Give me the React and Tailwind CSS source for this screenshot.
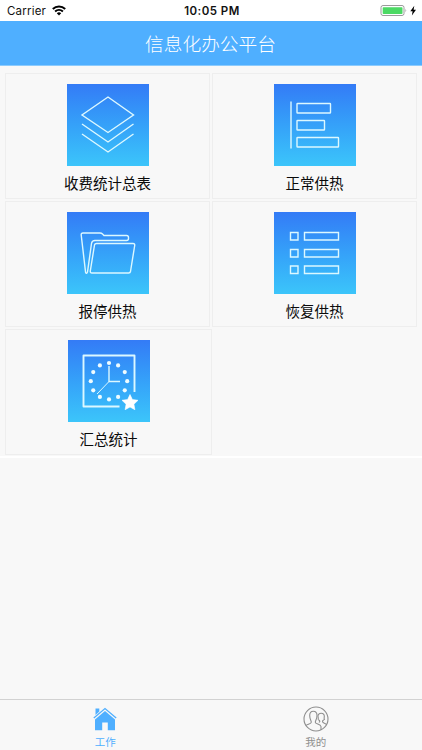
import React from "react";

function Tile({ children, label, last }) {
  return (
    <div
      className={
        "flex h-[126px] flex-col items-center border border-[#eeeeee] bg-[#f8f8f8] pt-[10px] " +
        (last ? "w-[207px]" : "w-[205px]")
      }
    >
      <svg className="h-[82px] w-[82px] shrink-0 bg-linear-to-b from-[#347bf6] to-[#3cc5fa]" viewBox="0 0 82 82" fill="none" stroke="#dcf8ff" strokeWidth="1.4">
        {children}
      </svg>
      <div className="mt-[6px] whitespace-nowrap text-[14.5px] leading-[21px] text-[#0a0a0a]">{label}</div>
    </div>
  );
}

const hours = [0, 1, 2, 3, 4, 5, 6, 7, 8, 9, 10, 11];

export default function App() {
  return (
    <div className="flex h-[750px] w-[422px] flex-col overflow-hidden bg-[#f8f8f8] font-['Noto_Sans_CJK_SC',sans-serif]">
      <div className="grid h-[21px] shrink-0 grid-cols-3 items-center bg-white pl-[7px] pr-[5px] font-['Inter',sans-serif] text-[11.5px] leading-[19px] text-[#111]">
        <div className="flex items-center gap-[6px]">
          <span className="pt-[2px] tracking-[0.2px]">Carrier</span>
          <svg className="h-[11px] w-[14px]" viewBox="0 0 14 11" fill="none" stroke="#000" strokeWidth="2">
            <path d="M.8 4C4.3.6 9.7.6 13.200 4M3.100 6.500C5.300 4.500 8.700 4.500 10.900 6.500" />
            <path d="M4.800 8.300Q7 6.400 9.200 8.300L7 10.600Z" fill="#000" stroke="none" />
          </svg>
        </div>
        <div className="whitespace-nowrap pt-[2px] text-center font-semibold tracking-[0.45px]">10:05 PM</div>
        <svg className="h-[13px] w-[37px] justify-self-end" viewBox="0 0 37 13">
          <rect x="1" y="1.500" width="23" height="10" rx="2" fill="#fff" stroke="#9b9b9b" />
          <rect x="2.700" y="3.200" width="19.800" height="6.800" rx=".7" fill="#4cd964" />
          <path d="M25.500 4.800Q27 6.500 25.500 8.200Z" fill="#999" />
          <path d="M34.300 1.800L30.300 7.200H32.600L31.900 11.400L36 5.700H33.600Z" fill="#000" />
        </svg>
      </div>
      <header className="flex h-[45px] shrink-0 items-center justify-center border-b border-[#8ccbfd] bg-[#4fafff] pr-px text-[18.7px] font-light text-white">
        信息化办公平台
      </header>
      <main className="flex h-[392px] shrink-0 flex-col gap-[2px] border-b-2 border-white pl-[5px] pt-[7px]">
        <div className="flex gap-[2px]">
          <Tile label="收费统计总表">
            <path d="M41 13L66.500 31L41 48.500L15 31ZM15 40L41 58L66.500 40M15 50L41 68L66.500 50" />
          </Tile>
          <Tile label="正常供热">
            <path d="M17 17.500V64.500" />
            <rect x="23" y="19.500" width="33.500" height="9.500" rx=".6" />
            <rect x="23" y="36.500" width="27.500" height="9.500" rx=".6" />
            <rect x="23" y="53.500" width="41.500" height="9.500" rx=".6" />
          </Tile>
        </div>
        <div className="flex gap-[2px]">
          <Tile label="报停供热">
            <path d="M18.600 60.500L14.200 23Q14 21 16 21H33Q34.500 21 35.500 22L37 23.500H59.500Q61.500 23.500 61.500 25.500V26.500Q61.500 28.500 59.500 28.500H28Q25 28.500 24.500 31.500L20.500 60Q19.500 62.500 18.600 60.500Z" />
            <path d="M29.500 31.500H66Q68 31.500 67.700 33.500L63.500 59.500Q63.200 61 61.700 61H25Q23 61 23.300 59L27.500 33Q27.800 31.500 29.500 31.500Z" />
          </Tile>
          <Tile label="恢复供热">
            <path d="M16.500 20.500h7.500v7.500h-7.500ZM30.500 20.500h34v7.500h-34ZM16.500 37.500h7.500v7.500h-7.500ZM30.500 37.500h34v7.500h-34ZM16.500 54h7.500v7.500h-7.500ZM30.500 54h34v7.500h-34Z" />
          </Tile>
        </div>
        <Tile label="汇总统计" last>
          <path d="M51.500 66.500H15.500V15.500H66.500V52" strokeWidth="1.9" strokeLinejoin="round" />
          <path d="M41 26V41.500H52" />
          <path d="M41 41.500L29 54" strokeWidth="1" />
          {hours.map((n) => (
            <circle
              key={n}
              cx={41 + 18.2 * Math.sin((n * Math.PI) / 6)}
              cy={41.2 - 18.2 * Math.cos((n * Math.PI) / 6)}
              r="2.100"
              fill="#effcff"
              stroke="none"
            />
          ))}
          <path d="M62 54.500L64.400 59.600L70 60.300L65.900 64.200L66.900 69.700L62 67L57.100 69.700L58.100 64.200L54 60.300L59.600 59.600Z" fill="#fff" stroke="#fff" strokeWidth=".6" />
        </Tile>
      </main>
      <nav className="mt-auto grid h-[51px] shrink-0 grid-cols-2 border-t border-[#d2d2d2] bg-[#f8f8f8] pr-px text-[10.5px] leading-[14px]">
        <div className="flex flex-col items-center pt-[6px] text-[#4fafff]">
          <svg className="h-[26px] w-[26px]" viewBox="0 0 26 26" fill="currentColor">
            <path d="M3.500 2.500H7.300V5.500L3.500 9Z" />
            <path d="M1.800 12L13 2.500L24.200 12" fill="none" stroke="currentColor" strokeWidth="1.300" />
            <path d="M3 13.500L13 5L23 13.500V24.300H15.800V16.500H10.200V24.300H3Z" />
          </svg>
          <span className="mt-[3px]">工作</span>
        </div>
        <div className="flex flex-col items-center pt-[6px] text-[#8e8e8e]">
          <svg className="h-[26px] w-[26px]" viewBox="0 0 26 26" fill="none" stroke="currentColor" strokeWidth="1.1">
            <circle cx="13" cy="13" r="12" />
            <path d="M3 19.500C4 18.200 8.300 18 8.300 16.200C8.300 14.600 6.700 13.200 6.700 9.500C6.700 6.700 8 5.200 10.300 5.200S14 6.700 14 9.500C14 13.200 12.300 14.600 12.300 16.200C12.300 18.200 17.500 18 18 20.500V24" />
            <path d="M15 13.500C15.800 12.500 15 11.500 15 10.300C15 8.200 16.200 7.200 18.200 7.200S21.300 8.200 21.300 10.300C21.300 11.500 20.700 12.500 21.500 13.500C20.800 14.300 19.500 14 19.500 15.500C19.500 17.200 22.500 17 23.300 18.500M15 13.500C15.700 14.300 16.800 14 16.800 15.500L16 16.500" />
          </svg>
          <span className="mt-[3px]">我的</span>
        </div>
      </nav>
    </div>
  );
}
